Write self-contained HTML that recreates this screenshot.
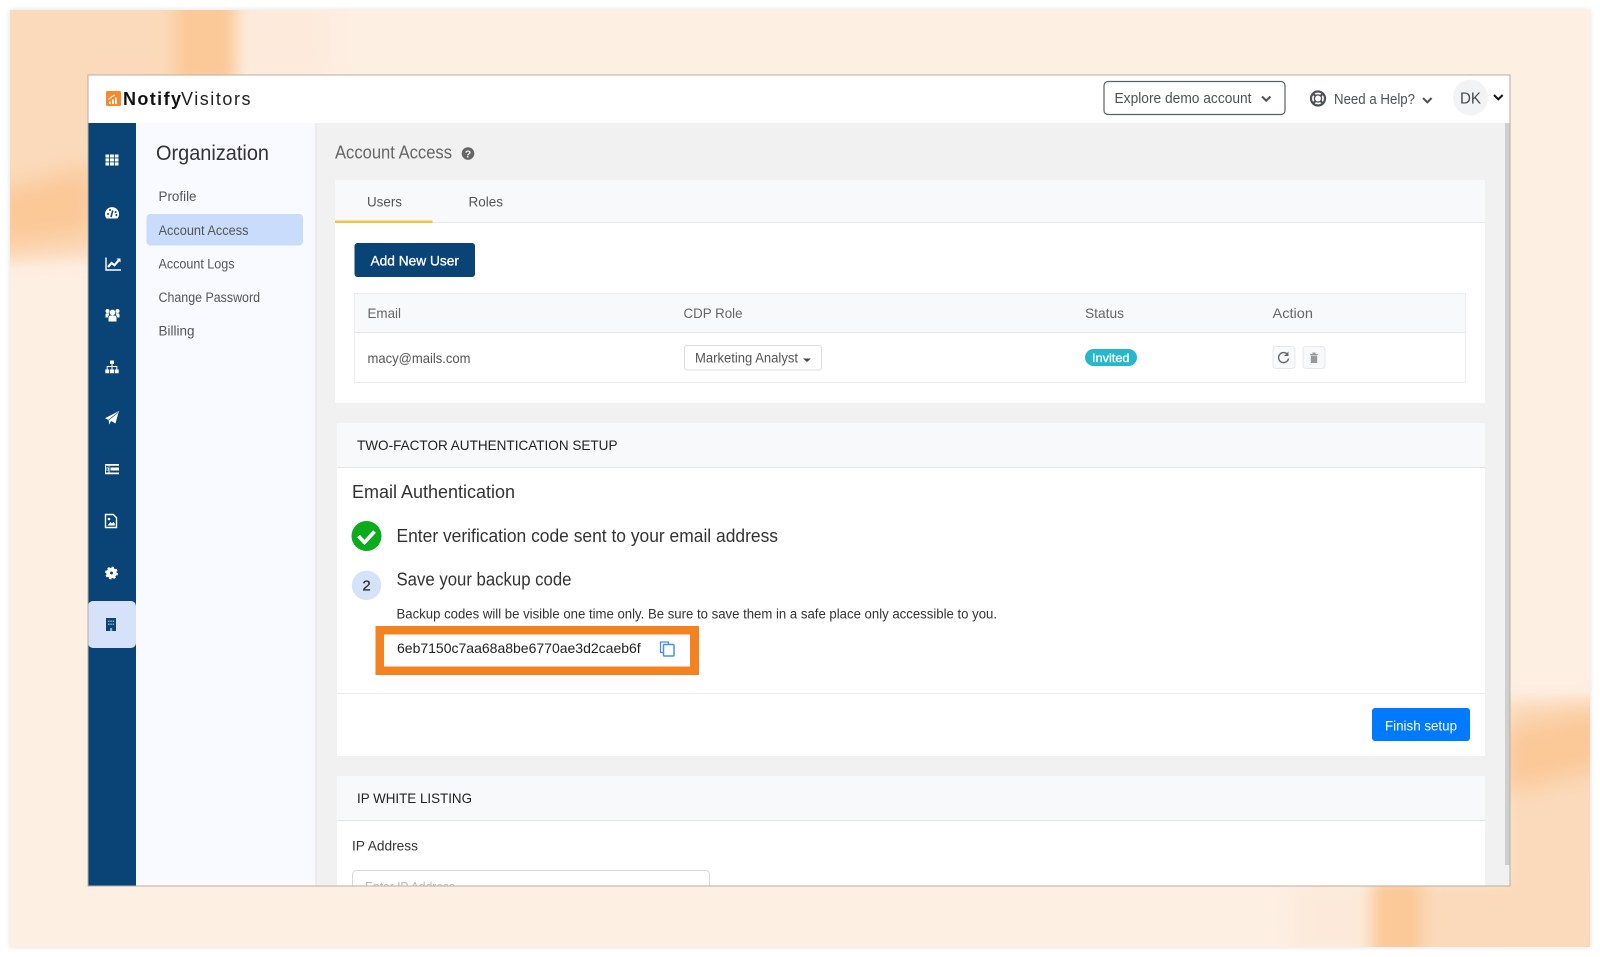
<!DOCTYPE html>
<html lang="en">
<head>
<meta charset="utf-8">
<title>Account Access</title>
<style>
html,body{margin:0;padding:0;background:#fff;width:1600px;height:957px;overflow:hidden}
svg{display:block;position:absolute;left:0;top:0;filter:blur(.3px)}
text{font-family:"Liberation Sans",sans-serif;white-space:pre}
.b{font-weight:700}
.m{stroke-width:.3px}
</style>
</head>
<body>
<svg width="1600" height="957" viewBox="0 0 1600 957" xmlns="http://www.w3.org/2000/svg">
<defs>
<filter id="s" x="-5%" y="-5%" width="110%" height="110%"><feGaussianBlur stdDeviation="3"/></filter>
<filter id="b1" x="-60%" y="-60%" width="220%" height="220%"><feGaussianBlur stdDeviation="8"/></filter>
<filter id="b2" x="-60%" y="-60%" width="220%" height="220%"><feGaussianBlur stdDeviation="12"/></filter>
<clipPath id="outer"><rect x="10" y="10" width="1580" height="937"/></clipPath>
<clipPath id="win"><rect x="88" y="75" width="1422" height="811"/></clipPath>
</defs>

<!-- outer frame -->
<rect x="10" y="10" width="1580" height="937" fill="#000" opacity=".13" filter="url(#s)"/>
<rect x="10" y="10" width="1580" height="937" fill="#feefe3"/>
<g clip-path="url(#outer)">
  <polygon points="-5,-5 185,-5 185,85 95,150 95,258 -5,262" fill="#fbdabb" filter="url(#b1)"/>
  <rect x="236" y="-5" width="95" height="85" fill="#fdeadb" filter="url(#b2)"/>
  <rect x="174" y="-10" width="62" height="95" fill="#fbc897" filter="url(#b1)"/>
  <polygon points="-5,192 95,165 95,234 -5,246" fill="#fbc897" filter="url(#b2)"/>
  <rect x="1505" y="700" width="100" height="260" fill="#fbdabb" filter="url(#b1)"/>
  <polygon points="1505,728 1605,708 1605,768 1505,792" fill="#fbc897" filter="url(#b2)"/>
  <rect x="1420" y="880" width="180" height="80" fill="#fbdabb" filter="url(#b1)"/>
  <rect x="1295" y="880" width="75" height="80" fill="#fce9d9" filter="url(#b2)"/>
  <rect x="1371" y="880" width="54" height="80" fill="#fbc897" filter="url(#b1)"/>
</g>

<!-- window -->
<g clip-path="url(#win)">
  <rect x="88" y="75" width="1422" height="811" fill="#f1f1f1"/>
  <rect x="88" y="75" width="1422" height="48" fill="#fff"/>
  <rect x="88" y="123" width="48" height="763" fill="#0a4477"/>
  <rect x="136" y="123" width="179" height="763" fill="#f8faff"/>
  <rect x="315" y="123" width="2" height="763" fill="#ececec"/>
  <rect x="1505" y="123" width="5" height="742" fill="#cfcfcf"/>

  <!-- logo -->
  <rect x="106" y="91" width="15" height="15" rx="1.500" fill="#f58a30"/>
  <path d="M109 104v-2.500h1.800v2.500zM112 104v-4.500h1.800v4.500zM115 104v-6.500h1.800v6.500z" fill="#fff"/>
  <path d="M108.500 99.500l3.500-3 3-1.500" stroke="#fff" stroke-width="1" fill="none"/>
  <text x="123" y="105" font-size="18" class="b" fill="#111" textLength="58" lengthAdjust="spacing">Notify</text>
  <text x="181" y="105" font-size="18" fill="#222" textLength="69.500" lengthAdjust="spacing">Visitors</text>

  <!-- top bar right -->
  <rect x="1104" y="81.500" width="181" height="33" rx="4" fill="#fff" stroke="#5b6066" stroke-width="1.200"/>
  <text x="1114.500" y="103" font-size="14.500" fill="#4c5157" textLength="137" lengthAdjust="spacingAndGlyphs">Explore demo account</text>
  <path d="M1262 96.500l4.200 4.200 4.200-4.200" fill="none" stroke="#4c5157" stroke-width="2"/>
  <circle cx="1318" cy="98.500" r="7" fill="none" stroke="#4c5157" stroke-width="2.200"/>
  <circle cx="1318" cy="98.500" r="3.600" fill="none" stroke="#4c5157" stroke-width="1.300"/>
  <path d="M1312.600 93.100l3 3M1323.400 93.100l-3 3M1312.600 103.900l3-3M1323.400 103.900l-3-3" stroke="#4c5157" stroke-width="2.200"/>
  <text x="1334" y="104" font-size="14.500" fill="#4c5157" textLength="81" lengthAdjust="spacingAndGlyphs">Need a Help?</text>
  <path d="M1423 98l4.300 4.300 4.300-4.300" fill="none" stroke="#4c5157" stroke-width="2"/>
  <ellipse cx="1470.500" cy="97.500" rx="17.500" ry="18" fill="#f1f3f4"/>
  <text x="1460" y="103.500" font-size="16" fill="#444a50" textLength="21" lengthAdjust="spacingAndGlyphs">DK</text>
  <path d="M1494 95l4.300 4.300 4.300-4.300" fill="none" stroke="#111" stroke-width="2"/>

  <!-- rail icons -->
  <g fill="#fff">
    <g transform="translate(112,160)">
      <path d="M-6.500-5.500h3.600v3h-3.600zM-2-5.500h3.900v3h-3.900zM2.800-5.500h3.700v3h-3.700zM-6.500-1.600h3.600v3.100h-3.600zM-2-1.600h3.900v3.100h-3.900zM2.800-1.600h3.700v3.100h-3.700zM-6.500 2.400h3.600v3.100h-3.600zM-2 2.400h3.900v3.100h-3.900zM2.800 2.400h3.700v3.100h-3.700z"/>
    </g>
    <g transform="translate(112,213)">
      <path d="M-5.500 5.500A7 7 0 1 1 5.500 5.500Z"/>
      <path d="M0.800-2.500L-1 4" stroke="#0a4477" stroke-width="1.600"/>
      <circle cx="-4" cy="1" r="1" fill="#0a4477"/><circle cx="-2" cy="-3" r="1" fill="#0a4477"/><circle cx="3.600" cy="-1" r="1" fill="#0a4477"/><circle cx="4.400" cy="2" r="1" fill="#0a4477"/>
    </g>
    <g transform="translate(113,264)" fill="none" stroke="#fff">
      <path d="M-7-6.500V6h15" stroke-width="1.400"/>
      <path d="M-5 3l3.500-4 3 2.200L6-4" stroke-width="2.200"/>
      <path d="M3.500-5.500h4v4z" fill="#fff" stroke="none"/>
    </g>
    <g transform="translate(112.500,315)">
      <circle cx="0" cy="-2.500" r="2.900"/><circle cx="-5" cy="-4" r="2"/><circle cx="5" cy="-4" r="2"/>
      <path d="M-4 6.500v-4a2.500 2.500 0 0 1 2.500-2h3a2.500 2.500 0 0 1 2.500 2v4z"/>
      <path d="M-7 2.500v-2.600q0-1.600 1.600-1.600h2L-3.600 0-5 2.500zM7 2.500v-2.600q0-1.600-1.600-1.600h-2L3.600 0 5 2.500z"/>
    </g>
    <g transform="translate(112,367)">
      <path d="M-2-6.500h4v3.500h-4zM-6.700 2.500h3.900v3.800h-3.900zM-2 2.500h4v3.800h-4zM2.800 2.500h3.900v3.800h-3.900z"/>
      <path d="M-.5-3h1v2H5.300v3.500h-1V0H.5v2.500h-1V0h-3.800v2.500h-1V-1H-.5z"/>
    </g>
    <g transform="translate(112,418)">
      <path d="M7-7L5-.2 3.500 5.500-.8 3-3 6.500-3.300 2-7 .2z"/>
      <path d="M6-5.500L-3.300 2" stroke="#0a4477" stroke-width=".7"/>
    </g>
    <g transform="translate(112,469)">
      <path d="M-7-5h14v1.800H-7zM-7 3.500h14v1.800H-7zM-7-1.500H7v3H-7z"/>
      <path d="M-6.500-3.200v6.700M-3-3.200v.9M-3 1.500v2" stroke="#fff" stroke-width="1"/>
      <path d="M-5.500-1.200l2 1.300-2 1.300z" fill="#0a4477"/>
      <path d="M-2.500-1.500h1v3h-1z" fill="#0a4477"/>
    </g>
    <g transform="translate(111,521)">
      <path d="M-5.500-6.500H2.300L5.500-3.300V6.500H-5.500z" fill="none" stroke="#fff" stroke-width="1.400"/>
      <path d="M-3.500 4.500L-.5 1 1 2.500 2.300.8 3.800 2.500v2z"/><circle cx="-2" cy="-2" r="1.300"/>
    </g>
    <g transform="translate(111.500,573)">
      <circle r="3.400" fill="none" stroke="#fff" stroke-width="3.800"/>
      <circle r="5.500" fill="none" stroke="#fff" stroke-width="1.800" stroke-dasharray="2.300 2.020"/>
    </g>
  </g>
  <rect x="88" y="601" width="48" height="47" rx="5" fill="#d5e2f9"/>
  <rect x="106" y="618" width="10" height="13" fill="#0a4477"/>
  <path d="M108 620.500h1.500v1.500H108zM110.300 620.500h1.500v1.500h-1.500zM112.600 620.500h1.500v1.500h-1.500zM108 623.500h1.500V625H108zM110.300 623.500h1.500V625h-1.500zM112.600 623.500h1.500V625h-1.500zM110 628h2.200v3H110z" fill="#8faac8"/>

  <!-- sub nav -->
  <text x="156" y="160" font-size="21" fill="#333" textLength="113" lengthAdjust="spacingAndGlyphs">Organization</text>
  <text x="158.500" y="201" font-size="13.500" fill="#555" textLength="38" lengthAdjust="spacingAndGlyphs">Profile</text>
  <rect x="146.500" y="214" width="156.500" height="31.500" rx="4" fill="#c9dcfb"/>
  <text x="158.500" y="235" font-size="13.500" fill="#555" textLength="90" lengthAdjust="spacingAndGlyphs">Account Access</text>
  <text x="158.500" y="268.500" font-size="13.500" fill="#555" textLength="76" lengthAdjust="spacingAndGlyphs">Account Logs</text>
  <text x="158.500" y="302" font-size="13.500" fill="#555" textLength="101.500" lengthAdjust="spacingAndGlyphs">Change Password</text>
  <text x="158.500" y="335.500" font-size="13.500" fill="#555" textLength="36" lengthAdjust="spacingAndGlyphs">Billing</text>

  <!-- heading -->
  <text x="335" y="158.500" font-size="18" fill="#666" textLength="117" lengthAdjust="spacingAndGlyphs">Account Access</text>
  <circle cx="468" cy="153.500" r="6.300" fill="#666"/>
  <text x="468" y="157.500" font-size="10.500" class="b" fill="#f1f1f1" text-anchor="middle">?</text>

  <!-- card 1 -->
  <rect x="335" y="180" width="1150" height="223" fill="#fff"/>
  <rect x="335" y="180" width="1150" height="42" fill="#f8f9fa"/>
  <rect x="335" y="222" width="1150" height="1" fill="#e9e9e9"/>
  <rect x="335" y="220.500" width="97.500" height="2.500" fill="#f5c242"/>
  <text x="367" y="206.500" font-size="14" fill="#555" textLength="35" lengthAdjust="spacingAndGlyphs">Users</text>
  <text x="468.500" y="206.500" font-size="14" fill="#555" textLength="34.500" lengthAdjust="spacingAndGlyphs">Roles</text>
  <rect x="354.500" y="243" width="120.500" height="34" rx="3" fill="#0a4477"/>
  <text x="370.500" y="265.500" font-size="14" class="m" fill="#fff" stroke="#fff" textLength="88.500" lengthAdjust="spacingAndGlyphs">Add New User</text>

  <rect x="354.500" y="293.500" width="1111" height="89" fill="#fff" stroke="#ececec"/>
  <rect x="355" y="294" width="1110" height="38" fill="#f8f9fa"/>
  <rect x="355" y="332" width="1110" height="1" fill="#e6e6e6"/>
  <text x="367.500" y="318" font-size="14" fill="#666" textLength="33.500" lengthAdjust="spacingAndGlyphs">Email</text>
  <text x="683.500" y="318" font-size="14" fill="#666" textLength="59" lengthAdjust="spacingAndGlyphs">CDP Role</text>
  <text x="1085" y="318" font-size="14" fill="#666" textLength="39" lengthAdjust="spacingAndGlyphs">Status</text>
  <text x="1272.500" y="318" font-size="14" fill="#666" textLength="40.500" lengthAdjust="spacingAndGlyphs">Action</text>
  <text x="367.500" y="363" font-size="14" fill="#555" textLength="103" lengthAdjust="spacingAndGlyphs">macy@mails.com</text>
  <rect x="684.500" y="345.500" width="137" height="24.500" rx="2.500" fill="#fff" stroke="#ddd"/>
  <text x="695" y="362.500" font-size="13.500" fill="#555" textLength="103" lengthAdjust="spacingAndGlyphs">Marketing Analyst</text>
  <path d="M803 358.500h8l-4 3.500z" fill="#444"/>
  <rect x="1085" y="349" width="52" height="17" rx="8.500" fill="#26b8c9"/>
  <text x="1092" y="362" font-size="12" class="m" fill="#fff" stroke="#fff" textLength="37.500" lengthAdjust="spacingAndGlyphs">Invited</text>
  <rect x="1273" y="346.500" width="22" height="22" rx="3" fill="#f8f9fa" stroke="#e8e8e8"/>
  <rect x="1303" y="346.500" width="22" height="22" rx="3" fill="#f8f9fa" stroke="#e8e8e8"/>
  <path d="M1287.500 354.500a5 5 0 1 0 1 4" fill="none" stroke="#666" stroke-width="1.400"/>
  <path d="M1288.500 351.500v4.500h-4.500z" fill="#666"/>
  <path d="M1310 354h8v1h-8zM1312.500 352.500h3v1.500h-3zM1310.800 355.500h6.400v7.500h-6.400z" fill="#999"/>

  <!-- card 2 -->
  <rect x="337" y="423" width="1148" height="333" fill="#fff"/>
  <rect x="337" y="423" width="1148" height="44" fill="#f8f9fa"/>
  <rect x="337" y="467" width="1148" height="1" fill="#e4e4e4"/>
  <text x="357" y="450" font-size="14" fill="#222" textLength="260.500" lengthAdjust="spacingAndGlyphs">TWO-FACTOR AUTHENTICATION SETUP</text>
  <text x="352" y="498" font-size="18" fill="#333" textLength="163" lengthAdjust="spacingAndGlyphs">Email Authentication</text>
  <circle cx="366.500" cy="536" r="15" fill="#0aab1c"/>
  <path d="M358.500 536l6 6.500 10-11" fill="none" stroke="#fff" stroke-width="3.600"/>
  <text x="396.500" y="542" font-size="18" fill="#333" textLength="381.500" lengthAdjust="spacingAndGlyphs">Enter verification code sent to your email address</text>
  <circle cx="366.500" cy="585.300" r="14.700" fill="#d5e2f9"/>
  <text x="366.500" y="590.500" font-size="15" class="m" stroke="#333" fill="#333" text-anchor="middle">2</text>
  <text x="396.500" y="585.500" font-size="18" fill="#333" textLength="175" lengthAdjust="spacingAndGlyphs">Save your backup code</text>
  <text x="396.500" y="618.500" font-size="13.500" fill="#333" textLength="600.500" lengthAdjust="spacingAndGlyphs">Backup codes will be visible one time only. Be sure to save them in a safe place only accessible to you.</text>
  <rect x="375.500" y="626" width="323.500" height="49" fill="#f58220"/>
  <rect x="384" y="634.500" width="306" height="32" fill="#fff"/>
  <text x="397" y="653" font-size="14" fill="#222" textLength="243.700" lengthAdjust="spacingAndGlyphs">6eb7150c7aa68a8be6770ae3d2caeb6f</text>
  <path d="M663.500 652.500h-3v-10.500h8v2" fill="none" stroke="#4a8fe0" stroke-width="1.300"/>
  <rect x="663.500" y="644.500" width="10.500" height="11.500" rx="1" fill="#fff" stroke="#4a8fe0" stroke-width="1.500"/>
  <rect x="337" y="693" width="1148" height="1" fill="#ececec"/>
  <rect x="1372" y="708" width="98" height="33" rx="3" fill="#007bff"/>
  <text x="1385" y="730.500" font-size="14" fill="#fff" textLength="72" lengthAdjust="spacingAndGlyphs">Finish setup</text>

  <!-- card 3 -->
  <rect x="337" y="776" width="1148" height="115" fill="#fff"/>
  <rect x="337" y="776" width="1148" height="44" fill="#f8f9fa"/>
  <rect x="337" y="820" width="1148" height="1" fill="#e4e4e4"/>
  <text x="357" y="803" font-size="14" fill="#222" textLength="115" lengthAdjust="spacingAndGlyphs">IP WHITE LISTING</text>
  <text x="352" y="850.500" font-size="14" fill="#333" textLength="66" lengthAdjust="spacingAndGlyphs">IP Address</text>
  <rect x="352.500" y="870.500" width="357" height="30" rx="4" fill="#fff" stroke="#d9d9d9"/>
  <text x="365" y="891" font-size="13" fill="#bbb" textLength="90" lengthAdjust="spacingAndGlyphs">Enter IP Address</text>
</g>
<rect x="88" y="75" width="1422" height="811" fill="none" stroke="#b8aea6" stroke-width="1"/>
</svg>
</body>
</html>
